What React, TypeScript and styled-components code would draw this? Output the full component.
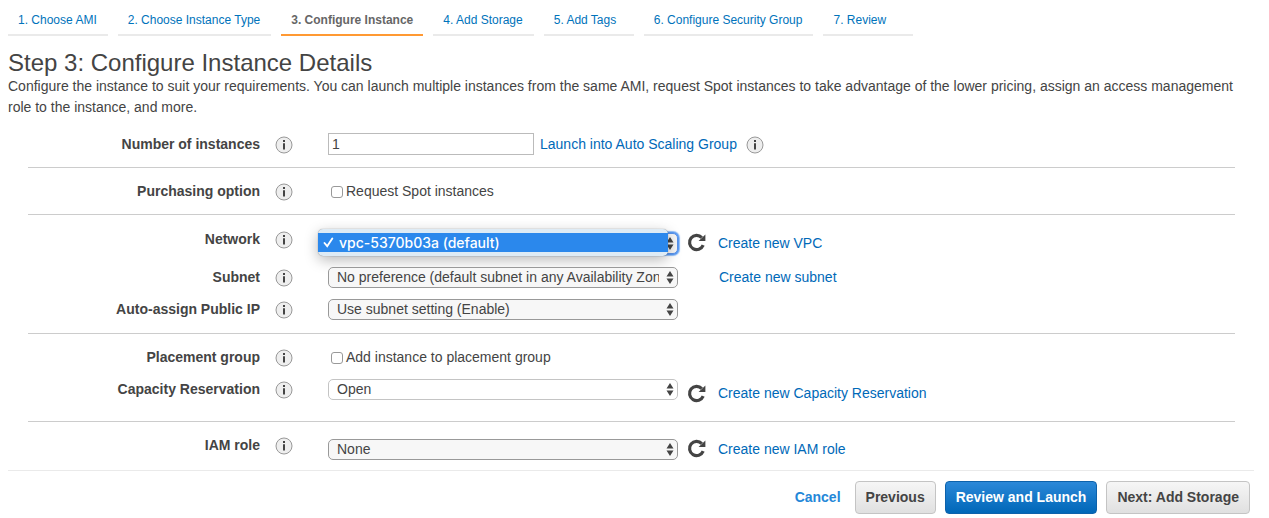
import React from "react";
import styled, { createGlobalStyle, css } from "styled-components";

const GlobalStyle = createGlobalStyle`
  * { box-sizing: border-box; }
  body {
    margin: 0;
    background: #fff;
    color: #444;
    font: 14px/21px "Liberation Sans", Arial, sans-serif;
  }
`;

const Page = styled.main`
  padding: 0 15px 0 8px;
`;

const Steps = styled.nav`
  display: flex;
  gap: 10px;
  padding-top: 4px;
`;

const Step = styled.a<{ $active?: boolean }>`
  min-width: 90px;
  height: 32px;
  padding: 0 ${(p) => (p.$active ? 10 : 11)}px 0 10px;
  border-bottom: 2px solid ${(p) => (p.$active ? "#f93" : "#eaeaea")};
  color: ${(p) => (p.$active ? "#666" : "#0073bb")};
  font-size: 12px;
  font-weight: ${(p) => (p.$active ? "bold" : "normal")};
  line-height: 32px;
  text-decoration: none;
  white-space: nowrap;
`;

const Title = styled.h1`
  margin: 13px 0 0;
  font-size: 24px;
  font-weight: normal;
  line-height: 27px;
`;

const Intro = styled.p`
  margin: 0;
`;

const Form = styled.form`
  margin: 3px 0 0;
`;

const Section = styled.section<{ $top: number; $bottom: number }>`
  margin: 0 19px 0 20px;
  padding: ${(p) => p.$top}px 0 ${(p) => p.$bottom}px;

  & + & {
    border-top: 1px solid #ccc;
  }
`;

const Row = styled.div<{ $tall?: boolean }>`
  display: grid;
  grid-template-columns: 232px 68px 1fr;
  align-items: center;
  height: ${(p) => (p.$tall ? 36 : 32)}px;
`;

const Label = styled.label<{ $raised?: boolean }>`
  text-align: right;
  font-weight: bold;
  padding-bottom: ${(p) => (p.$raised ? 8 : 0)}px;
`;

const InfoCell = styled.span<{ $raised?: boolean; $near?: boolean }>`
  display: flex;
  padding: 2px 0 ${(p) => (p.$raised ? 9 : 0)}px ${(p) => (p.$near ? 9 : 15)}px;
`;

const Controls = styled.div`
  display: flex;
  align-items: center;
`;

const Aside = styled.div<{ $lowered?: boolean }>`
  display: flex;
  align-items: center;
  height: 21px;
  margin-top: ${(p) => (p.$lowered ? 9 : 0)}px;
`;

const InfoButton = styled.button`
  display: block;
  padding: 0;
  border: 0;
  background: none;
  line-height: 0;
`;

const TextInput = styled.input`
  width: 206px;
  height: 22px;
  margin-right: 6px;
  padding: 0 3px;
  border: 1px solid #bbb;
  color: #444;
  font: inherit;
`;

const Check = styled.input`
  appearance: none;
  width: 12px;
  height: 12px;
  margin: 1px 3px 0;
  border: 1px solid #999;
  border-radius: 3px;
  background: #fff;
`;

const SelectWrap = styled.span`
  position: relative;
  display: flex;
  width: 350px;
  margin-right: 9px;
`;

const SelectBox = styled.select<{ $light?: boolean; $focused?: boolean }>`
  appearance: none;
  width: 100%;
  height: 21px;
  padding: 0 18px 0 8px;
  border: 1px solid ${(p) => (p.$light ? "#c4c4c4" : "#999")};
  border-radius: 5px;
  background: ${(p) => (p.$light ? "#fff" : "#f7f7f7")};
  color: #444;
  font: inherit;
  line-height: 19px;
  ${(p) =>
    p.$focused &&
    css`
      border-color: #5a93ea;
      box-shadow: 0 0 0 1px #5a9bf5, 0 0 1px 2px #8fbdf8;
    `}
`;

const Arrows = styled.svg`
  position: absolute;
  top: 4px;
  right: 4px;
  pointer-events: none;
`;

const Menu = styled.div`
  position: absolute;
  top: -4px;
  left: -10px;
  width: 350px;
  padding: 4px 0;
  border-radius: 5px;
  background: #deebf5;
  box-shadow: 0 0 1px rgba(0, 0, 0, 0.5), 0 4px 14px rgba(0, 0, 0, 0.28);
`;

const MenuItem = styled.div`
  display: flex;
  align-items: center;
  gap: 5px;
  height: 19px;
  padding-left: 5px;
  background: #2b88ec;
  color: #fff;
  font: 500 14px/19px Inter, sans-serif;
`;

const Refresh = styled.button`
  width: 20px;
  height: 20px;
  margin-right: 11px;
  padding: 0;
  border: 0;
  background: none;
  line-height: 0;
`;

const Spacer = styled.span`
  width: 32px;
`;

const Link = styled.a`
  color: #0069b8;
  text-decoration: none;
  white-space: nowrap;
`;

const Footer = styled.footer`
  display: flex;
  justify-content: flex-end;
  align-items: center;
  gap: 9px;
  padding: 10px 4px 4px;
  border-top: 1px solid #eaeaea;
`;

const Cancel = styled.a`
  margin-right: 5px;
  color: #2487d8;
  font-weight: bold;
  text-decoration: none;
`;

const Button = styled.button<{ $primary?: boolean }>`
  height: 33px;
  padding: 0 10px;
  border: 1px solid ${(p) => (p.$primary ? "#0d62ab" : "#c4c4c4")};
  border-radius: 4px;
  background: ${(p) =>
    p.$primary
      ? "linear-gradient(#2b88d8, #0067b8)"
      : "linear-gradient(#f6f6f6, #e0e0e0)"};
  color: ${(p) => (p.$primary ? "#fff" : "#444")};
  font: bold 14px/21px "Liberation Sans", Arial, sans-serif;
  white-space: nowrap;
`;

const Info = ({ about }: { about: string }) => (
  <InfoButton type="button" aria-label={`About ${about}`}>
    <svg width="18" height="18" viewBox="0 0 18 18">
      <circle cx="9" cy="9" r="8" fill="#eee" stroke="#999" />
      <path d="M8 4h2v2H8zM8 7.200h2v6.300H8z" fill="#444" />
    </svg>
  </InfoButton>
);

const RefreshButton = ({ about }: { about: string }) => (
  <Refresh type="button" aria-label={`Refresh ${about}`}>
    <svg width="20" height="20" viewBox="0 0 20 20">
      <path d="M14.800 4.600A7.100 7.100 0 1 0 16.200 12.200" fill="none" stroke="#444" strokeWidth="3.200" />
      <path d="M18.400 1.400V8H11.600z" fill="#444" />
    </svg>
  </Refresh>
);

type SelectProps = {
  id: string;
  value: string;
  light?: boolean;
  focused?: boolean;
  children?: React.ReactNode;
};

const Select = ({ id, value, light, focused, children }: SelectProps) => (
  <SelectWrap>
    <SelectBox id={id} $light={light} $focused={focused}>
      <option>{value}</option>
    </SelectBox>
    <Arrows width="8" height="13" viewBox="0 0 8 13">
      <path d="M4 0l3.500 5.500h-7zM4 13L.5 7.500h7z" fill="#444" />
    </Arrows>
    {children}
  </SelectWrap>
);

type FieldProps = {
  id: string;
  label: string;
  tall?: boolean;
  raised?: boolean;
  children: React.ReactNode;
};

const Field = ({ id, label, tall, raised, children }: FieldProps) => (
  <Row $tall={tall}>
    <Label htmlFor={id} $raised={raised}>{label}</Label>
    <InfoCell $raised={raised}>
      <Info about={label} />
    </InfoCell>
    <Controls>{children}</Controls>
  </Row>
);

const steps = [
  "1. Choose AMI",
  "2. Choose Instance Type",
  "3. Configure Instance",
  "4. Add Storage",
  "5. Add Tags",
  "6. Configure Security Group",
  "7. Review",
];

export default function App() {
  return (
    <Page>
      <GlobalStyle />
      <Steps>
        {steps.map((step, i) => (
          <Step key={step} href="#" $active={i === 2}>{step}</Step>
        ))}
      </Steps>
      <Title>Step 3: Configure Instance Details</Title>
      <Intro>
        Configure the instance to suit your requirements. You can launch multiple instances from the same AMI, request
        Spot instances to take advantage of the lower pricing, assign an access management role to the instance, and
        more.
      </Intro>
      <Form>
        <Section $top={7} $bottom={7}>
          <Field id="count" label="Number of instances">
            <TextInput id="count" defaultValue="1" />
            <Link href="#">Launch into Auto Scaling Group</Link>
            <InfoCell $near>
              <Info about="Auto Scaling Groups" />
            </InfoCell>
          </Field>
        </Section>
        <Section $top={7} $bottom={7}>
          <Field id="spot" label="Purchasing option">
            <Check id="spot" type="checkbox" />
            <label htmlFor="spot">Request Spot instances</label>
          </Field>
        </Section>
        <Section $top={10} $bottom={8}>
          <Field id="network" label="Network" tall raised>
            <Select id="network" value="vpc-5370b03a (default)" focused>
              <Menu role="listbox" aria-label="Network">
                <MenuItem role="option" aria-selected="true">
                  <svg width="11" height="11" viewBox="0 0 11 11">
                    <path d="M1.500 6l2.700 3.200L9.300 1.500" fill="none" stroke="#fff" strokeWidth="1.900" strokeLinecap="round" />
                  </svg>
                  vpc-5370b03a (default)
                </MenuItem>
              </Menu>
            </Select>
            <RefreshButton about="networks" />
            <Link href="#">Create new VPC</Link>
          </Field>
          <Field id="subnet" label="Subnet">
            <Select id="subnet" value="No preference (default subnet in any Availability Zone)" />
            <Spacer />
            <Link href="#">Create new subnet</Link>
          </Field>
          <Field id="publicip" label="Auto-assign Public IP">
            <Select id="publicip" value="Use subnet setting (Enable)" />
          </Field>
        </Section>
        <Section $top={7} $bottom={16}>
          <Field id="placement" label="Placement group">
            <Check id="placement" type="checkbox" />
            <label htmlFor="placement">Add instance to placement group</label>
          </Field>
          <Field id="capacity" label="Capacity Reservation">
            <Select id="capacity" value="Open" light />
            <Aside $lowered>
              <RefreshButton about="capacity reservations" />
              <Link href="#">Create new Capacity Reservation</Link>
            </Aside>
          </Field>
        </Section>
        <Section $top={11} $bottom={5}>
          <Field id="iam" label="IAM role" raised>
            <Select id="iam" value="None" />
            <Aside>
              <RefreshButton about="IAM roles" />
              <Link href="#">Create new IAM role</Link>
            </Aside>
          </Field>
        </Section>
        <Footer>
          <Cancel href="#">Cancel</Cancel>
          <Button type="button">Previous</Button>
          <Button type="button" $primary>Review and Launch</Button>
          <Button type="button">Next: Add Storage</Button>
        </Footer>
      </Form>
    </Page>
  );
}
